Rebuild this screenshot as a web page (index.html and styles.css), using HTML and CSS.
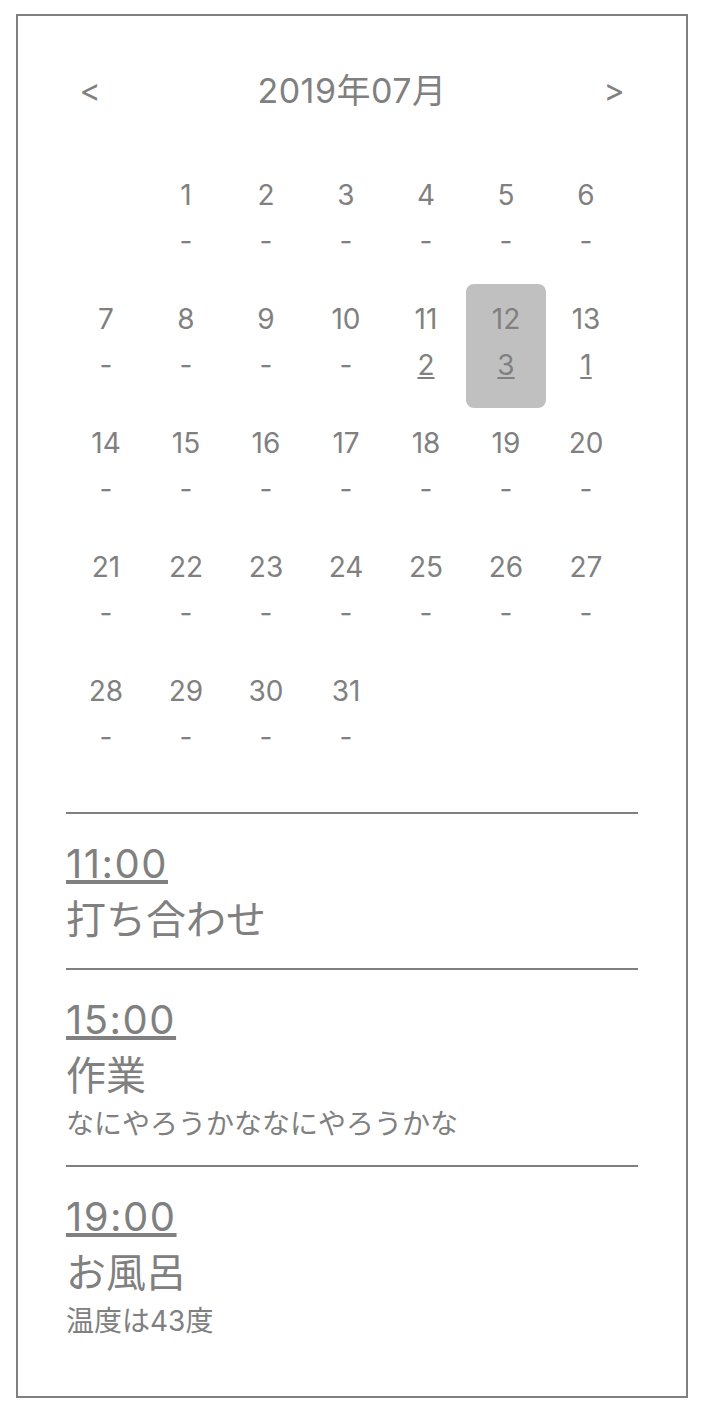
FILE: index.html
```html
<!DOCTYPE html>
<html lang="ja">
<head>
    <meta charset="UTF-8">
    <meta name="viewport" content="width=device-width, initial-scale=1.0">
    <title>カレンダー</title>
    <link rel="stylesheet" href="styles.css">
</head>
<body>
    <div class="container">
        <!-- Month header -->
        <div class="month-header">
            <a href="#" class="month-nav">&lt;</a>
            <span class="month-title">2019年07月</span>
            <a href="#" class="month-nav">&gt;</a>
        </div>

        <!-- Days of the month -->
        <div class="calendar">
            <div class="day empty"></div>
            <div class="day"><span class="day-num">1</span><span class="day-count">-</span></div>
            <div class="day"><span class="day-num">2</span><span class="day-count">-</span></div>
            <div class="day"><span class="day-num">3</span><span class="day-count">-</span></div>
            <div class="day"><span class="day-num">4</span><span class="day-count">-</span></div>
            <div class="day"><span class="day-num">5</span><span class="day-count">-</span></div>
            <div class="day"><span class="day-num">6</span><span class="day-count">-</span></div>

            <div class="day"><span class="day-num">7</span><span class="day-count">-</span></div>
            <div class="day"><span class="day-num">8</span><span class="day-count">-</span></div>
            <div class="day"><span class="day-num">9</span><span class="day-count">-</span></div>
            <div class="day"><span class="day-num">10</span><span class="day-count">-</span></div>
            <div class="day"><span class="day-num">11</span><a href="#" class="day-count has-events">2</a></div>
            <div class="day selected"><span class="day-num">12</span><a href="#" class="day-count has-events">3</a></div>
            <div class="day"><span class="day-num">13</span><a href="#" class="day-count has-events">1</a></div>

            <div class="day"><span class="day-num">14</span><span class="day-count">-</span></div>
            <div class="day"><span class="day-num">15</span><span class="day-count">-</span></div>
            <div class="day"><span class="day-num">16</span><span class="day-count">-</span></div>
            <div class="day"><span class="day-num">17</span><span class="day-count">-</span></div>
            <div class="day"><span class="day-num">18</span><span class="day-count">-</span></div>
            <div class="day"><span class="day-num">19</span><span class="day-count">-</span></div>
            <div class="day"><span class="day-num">20</span><span class="day-count">-</span></div>

            <div class="day"><span class="day-num">21</span><span class="day-count">-</span></div>
            <div class="day"><span class="day-num">22</span><span class="day-count">-</span></div>
            <div class="day"><span class="day-num">23</span><span class="day-count">-</span></div>
            <div class="day"><span class="day-num">24</span><span class="day-count">-</span></div>
            <div class="day"><span class="day-num">25</span><span class="day-count">-</span></div>
            <div class="day"><span class="day-num">26</span><span class="day-count">-</span></div>
            <div class="day"><span class="day-num">27</span><span class="day-count">-</span></div>

            <div class="day"><span class="day-num">28</span><span class="day-count">-</span></div>
            <div class="day"><span class="day-num">29</span><span class="day-count">-</span></div>
            <div class="day"><span class="day-num">30</span><span class="day-count">-</span></div>
            <div class="day"><span class="day-num">31</span><span class="day-count">-</span></div>
        </div>

        <!-- Events of the selected day -->
        <div class="events">
            <div class="event">
                <a href="#" class="event-time">11:00</a>
                <div class="event-title">打ち合わせ</div>
            </div>
            <div class="event">
                <a href="#" class="event-time">15:00</a>
                <div class="event-title">作業</div>
                <div class="event-detail">なにやろうかななにやろうかな</div>
            </div>
            <div class="event">
                <a href="#" class="event-time">19:00</a>
                <div class="event-title">お風呂</div>
                <div class="event-detail">温度は43度</div>
            </div>
        </div>
    </div>
</body>
</html>
```
FILE: styles.css
```css
body {
    margin: 0;
    background-color: #fff;
    color: #808080;
    font-family: Inter, "Noto Sans CJK JP", sans-serif;
}
a {
    color: #808080;
}
.container {
    width: 672px;
    margin: 14px 14px 14px 16px;
    padding: 48px 48px 34px;
    border: 2px solid #808080;
    box-sizing: border-box;
}

/* Month header */
.month-header {
    display: flex;
    justify-content: space-between;
    align-items: center;
    height: 52px;
    margin-bottom: 44px;
}
.month-nav {
    width: 48px;
    text-align: center;
    font-size: 32px;
    text-decoration: none;
}
.month-title {
    font-size: 34px;
    letter-spacing: 0.5px;
    margin-top: -4px;
}

/* Calendar grid */
.calendar {
    display: grid;
    grid-template-columns: repeat(7, 80px);
    grid-auto-rows: 124px;
    margin-bottom: 32px;
}
.day {
    display: flex;
    flex-direction: column;
    align-items: center;
    padding-top: 12px;
    box-sizing: border-box;
    font-size: 28px;
    line-height: 46px;
    border-radius: 8px;
}
.day.selected {
    background-color: #c0c0c0;
}
.day-count.has-events {
    text-decoration: underline;
}

/* Event list */
.event {
    display: flex;
    flex-direction: column;
    align-items: flex-start;
    border-top: 2px solid #808080;
    padding: 22px 0 20px;
}
.event-time {
    font-size: 40px;
    line-height: 56px;
    letter-spacing: 1.5px;
}
.event-title {
    font-size: 40px;
    line-height: 56px;
}
.event-detail {
    font-size: 28px;
    line-height: 41px;
}
```
